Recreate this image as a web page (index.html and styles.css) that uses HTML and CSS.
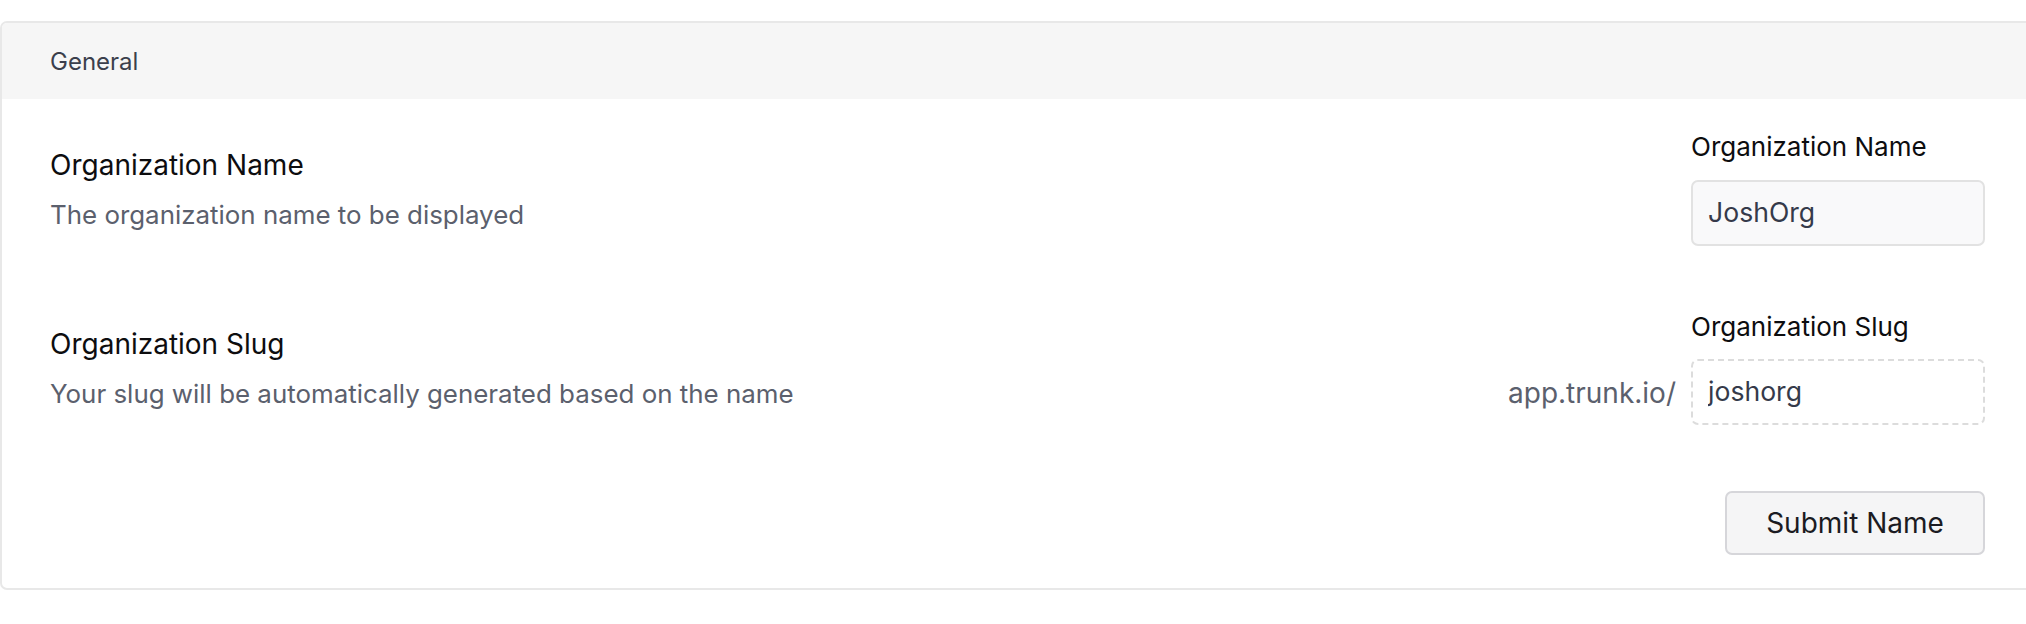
FILE: index.html
```html
<!DOCTYPE html>
<html lang="en">
<head>
<meta charset="utf-8">
<title>General settings</title>
<link rel="stylesheet" href="styles.css">
</head>
<body>
<div class="page">
  <section class="card">
    <header class="card-header">General</header>
    <div class="card-body">
      <div class="row">
        <div class="info">
          <h3 class="title">Organization Name</h3>
          <p class="desc">The organization name to be displayed</p>
        </div>
        <div class="control">
          <div class="field">
            <label class="label" for="org-name">Organization Name</label>
            <input class="input" id="org-name" type="text" value="JoshOrg">
          </div>
        </div>
      </div>
      <div class="row">
        <div class="info">
          <h3 class="title">Organization Slug</h3>
          <p class="desc">Your slug will be automatically generated based on the name</p>
        </div>
        <div class="control">
          <span class="prefix">app.trunk.io/</span>
          <div class="field">
            <label class="label" for="org-slug">Organization Slug</label>
            <input class="input dashed" id="org-slug" type="text" value="joshorg">
          </div>
        </div>
      </div>
      <div class="actions">
        <button class="btn" type="button">Submit Name</button>
      </div>
    </div>
  </section>
</div>
</body>
</html>
```
FILE: styles.css
```css
html, body {
  margin: 0;
  padding: 0;
}

body {
  font-family: Inter, "Noto Sans", sans-serif;
  background: #ffffff;
  overflow: hidden;
}

.page {
  padding-top: 21px;
}

.card {
  width: 2035px;
  box-sizing: border-box;
  border: 2px solid #e8e8e8;
  border-radius: 7px;
  overflow: hidden;
}

.card-header {
  background: #f6f6f6;
  padding: 21px 48px 20px;
  font-size: 24px;
  line-height: 35px;
  color: #3b3f4c;
}

.card-body {
  padding: 30px 48px 33px;
  display: flex;
  flex-direction: column;
  gap: 63px;
}

.row {
  display: flex;
  align-items: center;
  justify-content: space-between;
}

.info {
  padding-top: 1px;
}

.title {
  margin: 0;
  font-size: 28px;
  line-height: 42px;
  font-weight: 400;
  color: #0d0d0f;
}

.desc {
  margin: 11px 0 0;
  font-size: 25.9px;
  line-height: 35px;
  color: #5b606d;
}

.control {
  display: flex;
  align-items: flex-end;
  gap: 15px;
}

.field {
  display: flex;
  flex-direction: column;
  width: 294px;
}

.label {
  font-size: 26px;
  line-height: 36px;
  color: #0d0d0f;
  margin-bottom: 14.5px;
}

.input {
  box-sizing: border-box;
  width: 294px;
  height: 66px;
  margin: 0;
  border: 2px solid #e2e2e2;
  border-radius: 7px;
  background: #f9f9fa;
  padding: 0 15px 2px;
  font-family: inherit;
  font-size: 26.6px;
  color: #353a4a;
  outline: none;
}

.input.dashed {
  border-style: dashed;
  border-color: #dcdcdc;
  background: #ffffff;
}

.prefix {
  box-sizing: border-box;
  height: 66px;
  display: flex;
  align-items: center;
  padding-top: 2px;
  font-size: 28px;
  color: #5b606d;
}

.actions {
  display: flex;
  justify-content: flex-end;
  margin-top: 3px;
}

.btn {
  box-sizing: border-box;
  width: 260px;
  height: 64px;
  margin: 0;
  padding: 0;
  border: 2px solid #d6d6da;
  border-radius: 7px;
  background: #f5f5f6;
  font-family: inherit;
  font-size: 28px;
  color: #1b1b22;
}
```
